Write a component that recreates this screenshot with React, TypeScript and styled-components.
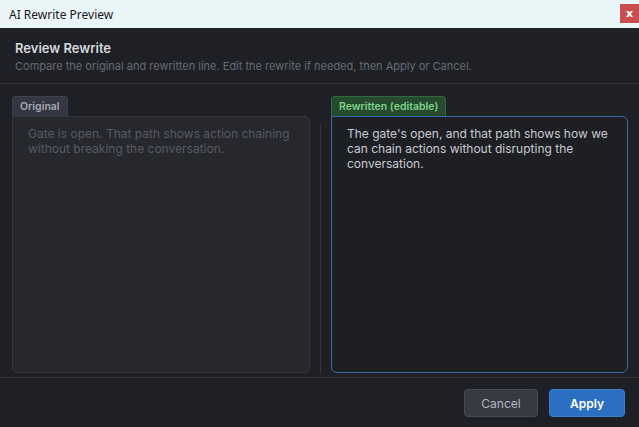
import styled, { createGlobalStyle } from 'styled-components';

const GlobalStyle = createGlobalStyle`
  html, body {
    margin: 0;
    padding: 0;
    background: #1f2025;
  }
  * {
    box-sizing: border-box;
  }
`;

const originalText =
  'Gate is open. That path shows action chaining without breaking the conversation.';
const rewrittenText =
  "The gate's open, and that path shows how we can chain actions without disrupting the conversation.";

const App = () => {
  return (
    <>
      <GlobalStyle />
      <Window>
        <TitleBar>
          <WindowTitle>AI Rewrite Preview</WindowTitle>
          <CloseButton>x</CloseButton>
        </TitleBar>
        <Dialog>
          <Header>
            <Title>Review Rewrite</Title>
            <Subtitle>
              Compare the original and rewritten line. Edit the rewrite if needed, then Apply or
              Cancel.
            </Subtitle>
          </Header>
          <Body>
            <Column>
              <Tab $variant="original">Original</Tab>
              <Panel $variant="original">{originalText}</Panel>
            </Column>
            <Divider />
            <Column>
              <Tab $variant="rewritten">Rewritten (editable)</Tab>
              <Panel $variant="rewritten">{rewrittenText}</Panel>
            </Column>
          </Body>
          <Footer>
            <Button $primary={false}>Cancel</Button>
            <Button $primary>Apply</Button>
          </Footer>
        </Dialog>
      </Window>
    </>
  );
};

export default App;

const Window = styled.div`
  display: flex;
  flex-direction: column;
  width: 639px;
  height: 427px;
  overflow: hidden;
`;

const TitleBar = styled.div`
  display: flex;
  justify-content: space-between;
  align-items: center;
  height: 28px;
  padding-left: 9px;
  background: #eaf5f8;
`;

const WindowTitle = styled.div`
  font-family: 'Noto Sans', 'Open Sans', sans-serif;
  font-size: 12px;
  color: #1a1a1a;
`;

const CloseButton = styled.div`
  display: flex;
  justify-content: center;
  align-items: center;
  width: 19px;
  height: 19px;
  margin-bottom: 1px;
  background: #c94f4f;
  color: #ffffff;
  font-family: 'DejaVu Sans', sans-serif;
  font-size: 11px;
  font-weight: 700;
`;

const Dialog = styled.div`
  display: flex;
  flex-direction: column;
  flex: 1;
  background: #1f2025;
  font-family: Inter, 'Noto Sans', sans-serif;
`;

const Header = styled.div`
  padding: 12px 15px 10px;
  border-bottom: 1px solid #33353b;
`;

const Title = styled.div`
  font-size: 13px;
  font-weight: 600;
  line-height: 16px;
  color: #d6d8dd;
`;

const Subtitle = styled.div`
  margin-top: 3px;
  font-size: 11px;
  line-height: 14px;
  color: #676b74;
`;

const Body = styled.div`
  display: grid;
  grid-template-columns: 298px 1px 297px;
  column-gap: 10px;
  flex: 1;
  padding: 12px 11px 4px 12px;
  border-bottom: 1px solid #33353b;
`;

const Column = styled.div`
  display: flex;
  flex-direction: column;
  align-items: flex-start;
`;

const Divider = styled.div`
  margin-top: 28px;
  background: #34363c;
`;

const Tab = styled.div<{ $variant: 'original' | 'rewritten' }>`
  display: flex;
  align-items: center;
  height: 20px;
  padding: 0 7px;
  border: 1px solid ${({ $variant }) => ($variant === 'original' ? '#3d404a' : '#2f6b3b')};
  border-bottom: none;
  border-radius: 4px 4px 0 0;
  background: ${({ $variant }) => ($variant === 'original' ? '#343743' : '#264a2e')};
  color: ${({ $variant }) => ($variant === 'original' ? '#a3a7b0' : '#7fd08c')};
  font-size: 10.5px;
  font-weight: 600;
`;

const Panel = styled.div<{ $variant: 'original' | 'rewritten' }>`
  flex: 1;
  align-self: stretch;
  padding: 9px 15px;
  border: 1px solid ${({ $variant }) => ($variant === 'original' ? '#35373d' : '#3b6ca8')};
  border-radius: ${({ $variant }) => ($variant === 'original' ? '0 5px 5px 5px' : '0 6px 6px 6px')};
  background: ${({ $variant }) => ($variant === 'original' ? '#27282e' : '#1e1f24')};
  color: ${({ $variant }) => ($variant === 'original' ? '#575a62' : '#c8cad0')};
  font-size: 12px;
  line-height: 15px;
`;

const Footer = styled.div`
  display: flex;
  justify-content: flex-end;
  gap: 11px;
  height: 49px;
  padding: 11px 14px 0 0;
`;

const Button = styled.button<{ $primary: boolean }>`
  height: 28px;
  width: ${({ $primary }) => ($primary ? '76px' : '74px')};
  border: 1px solid ${({ $primary }) => ($primary ? '#3a7fd0' : '#474b55')};
  border-radius: 4px;
  background: ${({ $primary }) => ($primary ? '#2b6fc2' : '#363a43')};
  color: ${({ $primary }) => ($primary ? '#ffffff' : '#b3b6bd')};
  font-family: Inter, 'Noto Sans', sans-serif;
  font-size: 12px;
  font-weight: ${({ $primary }) => ($primary ? 600 : 400)};
  cursor: pointer;
`;
